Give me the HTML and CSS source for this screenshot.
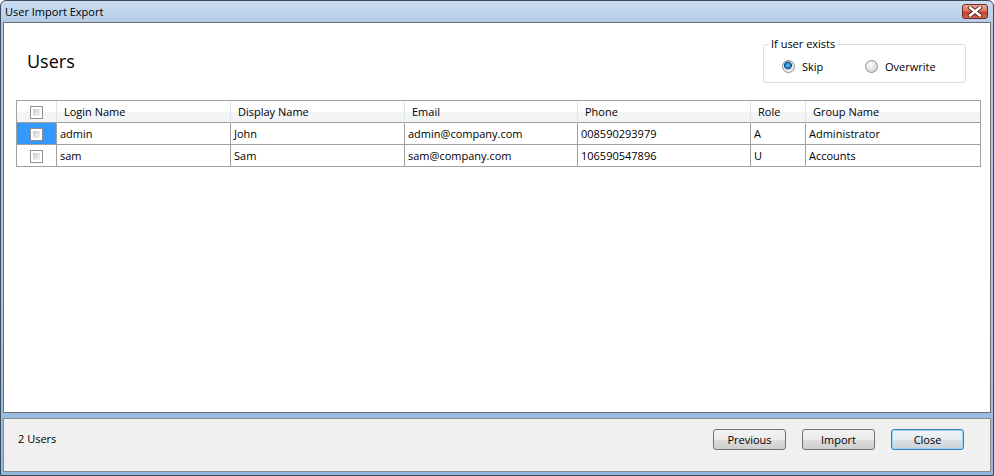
FILE: index.html
```html
<!DOCTYPE html>
<html lang="en">
<head>
  <meta charset="UTF-8">
  <title>User Import Export</title>
  <link rel="stylesheet" href="styles.css">
</head>
<body>
  <div class="window">
    <div class="titlebar">
      <span class="title">User Import Export</span>
      <span class="close-x">
        <svg width="16" height="11" viewBox="0 0 16 11">
          <path d="M3 1.5 L13 9.5 M13 1.5 L3 9.5" stroke="#5b2118" stroke-width="4.4" stroke-linecap="round"/>
          <path d="M3 1.5 L13 9.5 M13 1.5 L3 9.5" stroke="#fff" stroke-width="2.6" stroke-linecap="round"/>
        </svg>
      </span>
    </div>
    <div class="client">
      <div class="panel">
        <div class="head">
          <h1 class="heading">Users</h1>
          <fieldset class="exists">
            <legend>If user exists</legend>
            <label class="opt opt-first"><span class="radio checked"></span>Skip</label>
            <label class="opt"><span class="radio"></span>Overwrite</label>
          </fieldset>
        </div>
        <table class="grid">
          <colgroup>
            <col style="width:40px">
            <col style="width:174px">
            <col style="width:174px">
            <col style="width:173px">
            <col style="width:173px">
            <col style="width:55px">
            <col>
          </colgroup>
          <thead>
            <tr>
              <th class="chk-cell"><span class="check"></span></th>
              <th>Login Name</th>
              <th>Display Name</th>
              <th>Email</th>
              <th>Phone</th>
              <th>Role</th>
              <th>Group Name</th>
            </tr>
          </thead>
          <tbody>
            <tr>
              <td class="chk-cell selected"><span class="check"></span></td>
              <td>admin</td>
              <td>John</td>
              <td>admin@company.com</td>
              <td>008590293979</td>
              <td>A</td>
              <td>Administrator</td>
            </tr>
            <tr>
              <td class="chk-cell"><span class="check"></span></td>
              <td>sam</td>
              <td>Sam</td>
              <td>sam@company.com</td>
              <td>106590547896</td>
              <td>U</td>
              <td>Accounts</td>
            </tr>
          </tbody>
        </table>
      </div>
      <div class="footer">
        <span class="count">2 Users</span>
        <div class="buttons">
          <button class="btn">Previous</button>
          <button class="btn">Import</button>
          <button class="btn btn-default">Close</button>
        </div>
      </div>
    </div>
  </div>
</body>
</html>
```

FILE: styles.css
```css
body{
  margin: 0;
  font-family: "Open Sans", "Noto Sans", sans-serif;
  font-size: 11px;
  color: #000;
}
.window{
  width: 994px;
  height: 476px;
  box-sizing: border-box;
  display: flex;
  flex-direction: column;
  border: 1px solid #3d4a58;
  border-radius: 6px 6px 0 0;
  background: linear-gradient(to bottom, #cbdef2 0, #b3cbe8 22px, #a8c2e2 70%, #8fb9df 100%);
}
.titlebar{
  height: 21px;
  display: flex;
  align-items: flex-start;
  justify-content: space-between;
  padding-left: 4px;
}
.title{
  line-height: 21px;
  font-size: 11px;
}
.close-x{
  width: 26px;
  height: 15px;
  margin: 3px 5px 0 0;
  box-sizing: border-box;
  display: flex;
  align-items: center;
  justify-content: center;
  border: 1px solid #6e2a20;
  border-radius: 3px;
  background: linear-gradient(to bottom, #e9ab9c 0, #d77a66 45%, #c5442d 55%, #d0654a 100%);
}

.client{
  flex: 1;
  display: flex;
  flex-direction: column;
  margin: 0 2px 3px 2px;
}
.panel{
  flex: 1;
  background: #fff;
  border: 1px solid #6a6f75;
}
.head{
  height: 77px;
  display: flex;
  justify-content: space-between;
  align-items: flex-start;
}
.heading{
  margin: 26px 0 0 23px;
  font-size: 18px;
  font-weight: normal;
  line-height: 24px;
}
.exists{
  width: 203px;
  height: 47px;
  box-sizing: border-box;
  margin: 13px 24px 0 0;
  padding: 0 0 1px 18px;
  border: 1px solid #d5dfe5;
  border-radius: 3px;
  display: flex;
  align-items: center;
}
.exists legend{
  padding: 0 2px;
  margin-left: -13px;
  line-height: 16px;
}
.opt{
  display: flex;
  align-items: center;
  line-height: 16px;
}
.opt-first{
  width: 83px;
}
.radio{
  width: 13px;
  height: 13px;
  box-sizing: border-box;
  margin-right: 7px;
  border: 1px solid #8e8f8f;
  border-radius: 50%;
  background: radial-gradient(circle at 40% 35%, #ffffff 0, #e6e6e6 45%, #c6c6c6 100%);
}
.radio.checked{
  background: radial-gradient(circle at 45% 40%, #7fd2f7 0, #1c7fc2 28%, #0b4f8a 40%, #e3e3e3 48%, #f4f4f4 70%, #d0d0d0 100%);
}

/* 列表 */
.grid{
  width: 965px;
  margin-left: 12px;
  table-layout: fixed;
  border-collapse: separate;
  border-spacing: 0;
  border-top: 1px solid #a0a0a0;
  border-left: 1px solid #a0a0a0;
  border-right: 1px solid #a0a0a0;
}
.grid th{
  height: 21px;
  padding: 0 0 0 7px;
  text-align: left;
  font-weight: normal;
  border-right: 1px solid #e2e3e5;
  border-bottom: 1px solid #a0a0a0;
  background: linear-gradient(to bottom, #ffffff 0, #ffffff 50%, #f3f4f6 51%, #f3f4f6 100%);
  white-space: nowrap;
}
.grid td{
  height: 21px;
  padding: 0 0 0 3px;
  border-right: 1px solid #a0a0a0;
  border-bottom: 1px solid #a0a0a0;
  white-space: nowrap;
}
.grid th:last-child,
.grid td:last-child{
  border-right: none;
}
.grid .chk-cell{
  padding: 0;
  text-align: center;
}
.grid td.selected{
  background: #3399ff;
}
.check{
  display: inline-block;
  width: 13px;
  height: 13px;
  box-sizing: border-box;
  padding: 2px;
  vertical-align: middle;
  border: 1px solid #8e8f8f;
  background: linear-gradient(135deg, #c9cdd2, #f4f4f4) content-box, #fff;
}

.footer{
  height: 54px;
  box-sizing: border-box;
  margin-top: 5px;
  display: flex;
  justify-content: space-between;
  align-items: flex-start;
  padding: 10px 26px 0 14px;
  background: #f0f0f0;
  border: 1px solid #8a8a8a;
}
.count{
  line-height: 19px;
}
.buttons{
  display: flex;
  gap: 16px;
}
.btn{
  width: 73px;
  height: 21px;
  padding: 0;
  font-family: inherit;
  font-size: 11px;
  color: #000;
  border: 1px solid #707070;
  border-radius: 3px;
  background: linear-gradient(to bottom, #f2f2f2 0, #ebebeb 50%, #dddddd 51%, #cfcfcf 100%);
}
.btn-default{
  border-color: #3c7fb1;
  box-shadow: inset 0 0 0 1px #9ad5f5;
  background: linear-gradient(to bottom, #f0f4f7 0, #e7ecef 50%, #d9dfe3 51%, #cdd4d9 100%);
}
```
